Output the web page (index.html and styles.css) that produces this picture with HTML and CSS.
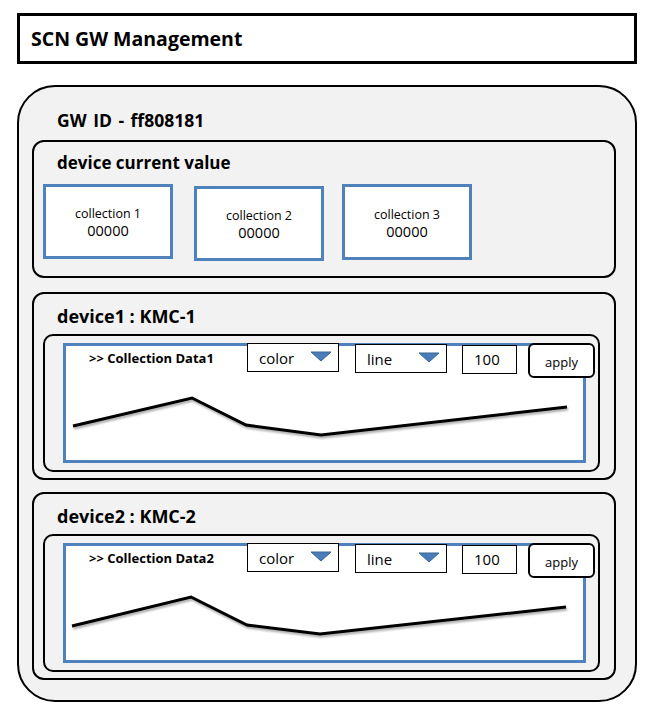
FILE: index.html
```html
<!DOCTYPE html>
<html lang="ko">
<head>
    <meta charset="UTF-8">
    <meta name="viewport" content="width=device-width, initial-scale=1.0">
    <title>SCN GW Management</title>
    <link rel="stylesheet" href="styles.css">
</head>
<body>
    <div class="page">
        <div class="header">SCN GW Management</div>

        <div class="gateway">
            <h2 class="gw-title">GW ID - ff808181</h2>

            <div class="section current">
                <h3 class="section-title">device current value</h3>
                <div class="values">
                    <div class="value-box">
                        <span class="value-name">collection 1</span>
                        <span class="value-num">00000</span>
                    </div>
                    <div class="value-box second">
                        <span class="value-name">collection 2</span>
                        <span class="value-num">00000</span>
                    </div>
                    <div class="value-box third">
                        <span class="value-name">collection 3</span>
                        <span class="value-num">00000</span>
                    </div>
                </div>
            </div>

            <div class="section device">
                <h3 class="section-title">device1 : KMC-1</h3>
                <div class="chart-panel">
                    <div class="chart-box">
                        <div class="chart-bar">
                            <span class="chart-name">&gt;&gt; Collection Data1</span>
                            <div class="select">
                                <span>color</span>
                                <svg class="arrow" width="22" height="11" viewBox="0 0 22 11"><polygon points="1,1 21,1 11,10" fill="#4a7ebb" stroke="#3a6496" stroke-width="1"/></svg>
                            </div>
                            <div class="select">
                                <span>line</span>
                                <svg class="arrow" width="22" height="11" viewBox="0 0 22 11"><polygon points="1,1 21,1 11,10" fill="#4a7ebb" stroke="#3a6496" stroke-width="1"/></svg>
                            </div>
                            <div class="num-input">100</div>
                            <button class="apply">apply</button>
                        </div>
                        <svg class="chart" width="516" height="82" viewBox="0 0 516 82">
                            <polyline points="7,48 126,20 180,47 255,57 501,29" fill="none" stroke="#000" stroke-width="3" stroke-linejoin="miter"/>
                        </svg>
                    </div>
                </div>
            </div>

            <div class="section device">
                <h3 class="section-title">device2 : KMC-2</h3>
                <div class="chart-panel">
                    <div class="chart-box">
                        <div class="chart-bar">
                            <span class="chart-name">&gt;&gt; Collection Data2</span>
                            <div class="select">
                                <span>color</span>
                                <svg class="arrow" width="22" height="11" viewBox="0 0 22 11"><polygon points="1,1 21,1 11,10" fill="#4a7ebb" stroke="#3a6496" stroke-width="1"/></svg>
                            </div>
                            <div class="select">
                                <span>line</span>
                                <svg class="arrow" width="22" height="11" viewBox="0 0 22 11"><polygon points="1,1 21,1 11,10" fill="#4a7ebb" stroke="#3a6496" stroke-width="1"/></svg>
                            </div>
                            <div class="num-input">100</div>
                            <button class="apply">apply</button>
                        </div>
                        <svg class="chart" width="516" height="82" viewBox="0 0 516 82">
                            <polyline points="6,48 125,19 181,47 254,56 500,29" fill="none" stroke="#000" stroke-width="3" stroke-linejoin="miter"/>
                        </svg>
                    </div>
                </div>
            </div>
        </div>
    </div>
</body>
</html>
```

FILE: styles.css
```css
* {
    margin: 0;
    padding: 0;
    box-sizing: border-box;
    font-family: "Open Sans", "Noto Sans CJK KR", sans-serif;
}

body {
    background-color: #fff;
    color: #000;
}

.page {
    padding: 13px 0 0 17px;
    width: 659px;
}

.header {
    width: 620px;
    height: 51px;
    border: 3px solid #000;
    padding-left: 11px;
    font-size: 19.5px;
    font-weight: bold;
    line-height: 45px;
}

.gateway {
    margin-top: 21px;
    width: 620px;
    height: 617px;
    border: 2px solid #000;
    border-radius: 38px;
    background-color: #f2f2f2;
    padding: 22px 0 0 13px;
}

.gw-title {
    font-size: 17.5px;
    line-height: 22px;
    margin-left: 25px;
    margin-bottom: 9px;
    word-spacing: 2px;
}

.section {
    width: 584px;
    border: 2px solid #000;
    border-radius: 12px;
    background-color: #f2f2f2;
}

.section-title {
    font-size: 17px;
    line-height: 22px;
}

.current {
    height: 138px;
    padding: 10px 0 0 9px;
}

.current .section-title {
    margin-left: 14px;
}

.values {
    display: flex;
    gap: 21px;
    margin-top: 10px;
    align-items: flex-start;
}

.value-box {
    width: 130px;
    height: 75px;
    background-color: #fff;
    border: 3px solid #4f81bd;
    display: flex;
    flex-direction: column;
    align-items: center;
    justify-content: center;
    padding-top: 2px;
}

.value-box.second {
    margin-top: 2px;
}

.value-box.third {
    margin-left: -3px;
    height: 76px;
}

.value-name {
    font-size: 12.5px;
    line-height: 17px;
}

.value-num {
    font-size: 14.5px;
    line-height: 18px;
}

.device {
    height: 188px;
    margin-top: 14px;
    padding: 11px 0 0 9px;
}

.device + .device {
    margin-top: 12px;
}

.device .section-title {
    margin-left: 14px;
    font-size: 18px;
}

.chart-panel {
    margin-top: 7px;
    width: 557px;
    height: 138px;
    border: 2px solid #000;
    border-radius: 10px;
    padding: 7px 0 0 18px;
}

.chart-box {
    width: 523px;
    height: 120px;
    background-color: #fff;
    border: 3px solid #4f81bd;
    display: flex;
    flex-direction: column;
}

.chart-bar {
    display: flex;
    align-items: flex-start;
    margin-top: -3px;
    height: 35px;
}

.chart-bar > * {
    flex-shrink: 0;
}

.chart-name {
    font-size: 13px;
    font-weight: bold;
    margin: 7px 0 0 23px;
    width: 158px;
    line-height: 16px;
    white-space: nowrap;
}

.select {
    width: 92px;
    height: 29px;
    background-color: #fff;
    border: 1px solid #000;
    display: flex;
    align-items: center;
    justify-content: space-between;
    padding: 0 6px 0 11px;
    font-size: 15px;
    margin-right: 16px;
}

.select + .select {
    margin-top: 1px;
    margin-right: 15px;
}

.arrow {
    margin-top: -3px;
}

.num-input {
    width: 55px;
    height: 29px;
    margin-top: 2px;
    background-color: #fff;
    border: 1px solid #000;
    font-size: 15px;
    line-height: 27px;
    padding-left: 11px;
}

.apply {
    margin-left: 11px;
    width: 67px;
    height: 35px;
    background-color: #fff;
    border: 2px solid #000;
    border-radius: 6px;
    font-size: 13px;
    padding-top: 2px;
}

.chart {
    display: block;
    filter: drop-shadow(1px 2px 1px rgba(0, 0, 0, 0.35));
}
```
